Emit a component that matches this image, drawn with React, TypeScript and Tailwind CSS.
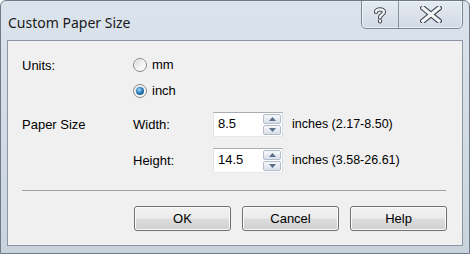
import React from "react";

const Radio = ({ checked }: { checked?: boolean }) => (
  <span className="relative inline-flex h-[14px] w-[14px] items-center justify-center rounded-full border border-[#8a8a8a] bg-gradient-to-br from-[#cfcfcf] via-[#f2f2f2] to-[#ffffff] shadow-[inset_0_0_0_1px_#f6f6f6]">
    {checked && (
      <span className="h-[8px] w-[8px] rounded-full bg-[radial-gradient(circle_at_40%_35%,#a6dbf8_0%,#2d7fc0_45%,#0d3a66_100%)]" />
    )}
  </span>
);

const Spinner = ({ value }: { value: string }) => (
  <div className="flex h-[25px] w-[70px] border border-[#abadb3] border-l-[#e2e3ea] border-b-[#e3e9ef] border-r-[#dbdfe6] bg-white">
    <div className="flex-1 pl-[4px] pt-[2px] text-[13px] leading-[18px] text-black">{value}</div>
    <div className="flex w-[19px] flex-col gap-[1px] py-[1px] pr-[1px]">
      <div className="flex flex-1 items-center justify-center rounded-[2px] border border-[#b3bccb] bg-gradient-to-b from-[#f6f8fb] to-[#d9dfe8]">
        <svg width="7" height="4" viewBox="0 0 7 4">
          <path d="M0 4 L3.5 0 L7 4 Z" fill="#5a6d8c" />
        </svg>
      </div>
      <div className="flex flex-1 items-center justify-center rounded-[2px] border border-[#b3bccb] bg-gradient-to-b from-[#f6f8fb] to-[#d9dfe8]">
        <svg width="7" height="4" viewBox="0 0 7 4">
          <path d="M0 0 L3.5 4 L7 0 Z" fill="#5a6d8c" />
        </svg>
      </div>
    </div>
  </div>
);

const DialogButton = ({ label }: { label: string }) => (
  <button className="h-[25px] w-[97px] rounded-[3px] border border-[#707070] bg-[linear-gradient(to_bottom,#f2f2f2_0%,#ebebeb_48%,#dddddd_52%,#cfcfcf_100%)] text-[13px] text-black shadow-[inset_0_0_0_1px_#fcfcfc]">
    {label}
  </button>
);

export default function App() {
  return (
    <div
      className="flex h-[254px] w-[470px] flex-col overflow-hidden rounded-t-[6px] border border-[#707b89] bg-gradient-to-b from-[#dbe3ec] via-[#d3dce6] to-[#c9d3de]"
      style={{ fontFamily: '"Liberation Sans", Arial, sans-serif' }}
    >
      {/* title bar */}
      <div className="flex h-[39px] shrink-0 items-start justify-between">
        <div
          className="pl-[7px] pt-[12px] text-[14px] leading-[20px] text-[#1a1a1a]"
          style={{ fontFamily: '"Noto Sans", "Open Sans", sans-serif' }}
        >
          Custom Paper Size
        </div>
        <div className="mr-[6px] mt-[-1px] flex h-[29px] overflow-hidden rounded-b-[5px] border border-[#7d8794] bg-gradient-to-b from-[#e4eaf1] to-[#d2dae4] shadow-[inset_0_0_0_1px_#eef2f6]">
          <div className="flex w-[37px] items-center justify-center border-r border-[#8a94a1]">
            <svg width="16" height="18" viewBox="0 0 16 18">
              <path
                d="M4 6 C4 2.5 12 2.5 12 6 C12 8.5 8 8.5 8 11.5 M8 14.5 L8 15.5"
                fill="none"
                stroke="#3d4450"
                strokeWidth="4.2"
                strokeLinecap="round"
              />
              <path
                d="M4 6 C4 2.5 12 2.5 12 6 C12 8.5 8 8.5 8 11.5 M8 14.5 L8 15.5"
                fill="none"
                stroke="#f4f6f8"
                strokeWidth="2.2"
                strokeLinecap="round"
              />
            </svg>
          </div>
          <div className="flex w-[63px] items-center justify-center">
            <svg width="22" height="17" viewBox="0 0 22 17">
              <path d="M3 2 L19 15 M19 2 L3 15" stroke="#3d4450" strokeWidth="5.5" strokeLinecap="square" />
              <path d="M3 2 L19 15 M19 2 L3 15" stroke="#f4f6f8" strokeWidth="3.3" strokeLinecap="square" />
            </svg>
          </div>
        </div>
      </div>

      {/* client area */}
      <div className="mx-[6px] mb-[7px] flex flex-1 flex-col border border-[#8c96a3] bg-[#f0f0f0] px-[14px] text-[13px] text-black">
        <div className="grid grid-cols-[111px_1fr] pt-[16px]">
          <div className="pt-[1px] leading-[16px]">Units:</div>
          <div className="flex flex-col gap-[10px]">
            <label className="flex h-[16px] items-center gap-[5px]">
              <Radio />
              <span>mm</span>
            </label>
            <label className="flex h-[16px] items-center gap-[5px]">
              <Radio checked />
              <span>inch</span>
            </label>
          </div>
        </div>

        <div className="mt-[13px] grid grid-cols-[111px_80px_70px_1fr] items-center gap-y-[11px]">
          <div>Paper Size</div>
          <div>Width:</div>
          <Spinner value="8.5" />
          <div className="pl-[9px] text-[12.5px]">inches (2.17-8.50)</div>
          <div />
          <div>Height:</div>
          <Spinner value="14.5" />
          <div className="pl-[9px] text-[12.5px]">inches (3.58-26.61)</div>
        </div>

        <div className="mt-[17px] h-[2px] w-[424px] border-t border-[#a0a0a0] border-b-white" />

        <div className="mt-[14px] flex justify-end gap-[11px] pr-[1px]">
          <DialogButton label="OK" />
          <DialogButton label="Cancel" />
          <DialogButton label="Help" />
        </div>
      </div>
    </div>
  );
}
